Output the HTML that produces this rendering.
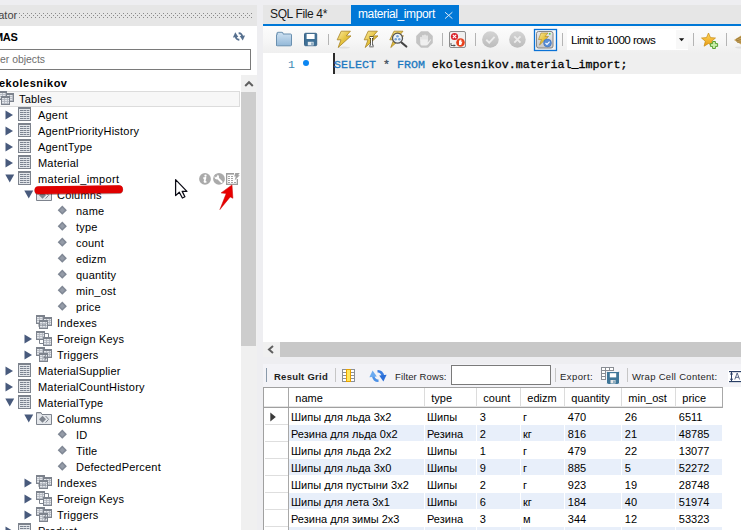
<!DOCTYPE html><html><head><meta charset="utf-8"><style>
*{box-sizing:border-box;margin:0;padding:0}
html,body{width:741px;height:530px;overflow:hidden;background:#eeeef1;font-family:"Liberation Sans",sans-serif;font-size:11px;color:#000}
body{position:relative}
.a{position:absolute;white-space:nowrap}
.sep{position:absolute;width:1px;background:#c6c6c6}
.tt{position:absolute;white-space:nowrap;line-height:14px;letter-spacing:0.2px;color:#000}
.gc{position:absolute;white-space:nowrap;line-height:14px;font-size:11px;color:#000}
</style></head><body><div class="a" style="left:0;top:5px;width:257px;height:21px;background:#e6e6e6;overflow:hidden;z-index:2"><div class="a" style="left:-1.8px;top:3px;font-size:11px;color:#444;line-height:14px">ator</div><svg class="a" style="left:19px;top:8px" width="233" height="5"><defs><pattern id="dp" width="4" height="4" patternUnits="userSpaceOnUse"><rect x="0" y="0" width="1" height="1" fill="#8a8a8a"/><rect x="2" y="2" width="1" height="1" fill="#8a8a8a"/></pattern></defs><rect x="0" y="0" width="233" height="5" fill="url(#dp)"/></svg></div><div class="a" style="left:0;top:25px;width:257px;height:505px;background:#fff;overflow:hidden"><div class="a" style="left:-6px;top:5px;font-weight:bold;font-size:11px;line-height:14px;letter-spacing:-0.3px">MAS</div><svg class="a" style="left:230px;top:4px" width="18" height="14" viewBox="369 368 18 15"><g transform="translate(378 376) scale(0.74 0.74) translate(-378 -376)"><path d="M372 376 A6 6 0 0 0 378.5 382 L378.5 379.2 A3.2 3.2 0 0 1 374.8 376 Z" fill="#56708f"/><path d="M372.6 370 L369.2 377.4 L377 376.6 Z" fill="#56708f"/><path d="M384 376 A6 6 0 0 0 377.5 370 L377.5 372.8 A3.2 3.2 0 0 1 381.2 376 Z" fill="#56708f"/><path d="M383.4 382 L386.8 374.6 L379 375.4 Z" fill="#56708f"/></g></svg><div class="a" style="left:-1px;top:24px;width:252px;height:21px;border:1px solid #7a7a7a;background:#fff"></div><div class="a" style="left:0px;top:28px;color:#6d6d6d;line-height:14px;font-size:10.4px">er objects</div><div class="a" style="left:-1px;top:51px;font-weight:bold;line-height:14px;letter-spacing:0.5px">ekolesnikov</div><div class="a" style="left:241px;top:50px;width:16px;height:460px;background:#f0f0f0"></div><svg class="a" style="left:244px;top:55px" width="10" height="7" viewBox="0 0 10 7"><path d="M1.2 6 L5 2.2 L8.8 6" stroke="#606060" stroke-width="2" fill="none"/></svg><div class="a" style="left:241px;top:67px;width:15px;height:254px;background:#cdcdcd"></div><div class="a" style="left:-1px;top:66px;width:241px;height:16px;background:#f7f7f7;border:1px solid #dcdcdc"></div><svg class="a" style="left:0px;top:66px" width="15" height="15" viewBox="0 0 15 15"><rect x="-1" y="0" width="8" height="9" fill="#7d838d"/><rect x="0" y="2" width="6" height="6" fill="#e4e7eb"/><rect x="0" y="3" width="6" height="0.8" fill="#b0b5bd"/><rect x="0" y="5" width="6" height="0.8" fill="#b0b5bd"/><rect x="0" y="7" width="6" height="0.8" fill="#b0b5bd"/><rect x="2" y="2" width="0.8" height="6" fill="#b0b5bd"/><rect x="5" y="2" width="0.8" height="6" fill="#b0b5bd"/><rect x="6" y="2" width="8" height="9" fill="#7d838d"/><rect x="7" y="4" width="6" height="6" fill="#e4e7eb"/><rect x="7" y="5" width="6" height="0.8" fill="#b0b5bd"/><rect x="7" y="7" width="6" height="0.8" fill="#b0b5bd"/><rect x="7" y="9" width="6" height="0.8" fill="#b0b5bd"/><rect x="9" y="4" width="0.8" height="6" fill="#b0b5bd"/><rect x="12" y="4" width="0.8" height="6" fill="#b0b5bd"/><rect x="1" y="5" width="9" height="9" fill="#7d838d"/><rect x="2" y="7" width="7" height="6" fill="#e4e7eb"/><rect x="2" y="8" width="7" height="0.8" fill="#b0b5bd"/><rect x="2" y="10" width="7" height="0.8" fill="#b0b5bd"/><rect x="2" y="12" width="7" height="0.8" fill="#b0b5bd"/><rect x="4" y="7" width="0.8" height="6" fill="#b0b5bd"/><rect x="7" y="7" width="0.8" height="6" fill="#b0b5bd"/></svg><div class="tt" style="left:19px;top:67px">Tables</div><svg class="a" style="left:5px;top:85px" width="9" height="10" viewBox="0 0 9 10"><path d="M0.5 0.5 L8 5 L0.5 9.5 Z" fill="#485a7c"/></svg><svg class="a" style="left:18px;top:82px" width="13" height="14" viewBox="0 0 13 14"><rect x="0" y="0" width="13" height="14" fill="#7d838d"/><rect x="1" y="2" width="11" height="11" fill="#e4e7eb"/><rect x="2" y="3" width="3" height="1" fill="#7b8390"/><rect x="5.4" y="3" width="3" height="1" fill="#7b8390"/><rect x="9" y="3" width="2.3" height="1" fill="#7b8390"/><rect x="2" y="5" width="3" height="1" fill="#7b8390"/><rect x="5.4" y="5" width="3" height="1" fill="#7b8390"/><rect x="9" y="5" width="2.3" height="1" fill="#7b8390"/><rect x="2" y="7" width="3" height="1" fill="#7b8390"/><rect x="5.4" y="7" width="3" height="1" fill="#7b8390"/><rect x="9" y="7" width="2.3" height="1" fill="#7b8390"/><rect x="2" y="9" width="3" height="1" fill="#7b8390"/><rect x="5.4" y="9" width="3" height="1" fill="#7b8390"/><rect x="9" y="9" width="2.3" height="1" fill="#7b8390"/><rect x="2" y="11" width="3" height="1" fill="#7b8390"/><rect x="5.4" y="11" width="3" height="1" fill="#7b8390"/><rect x="9" y="11" width="2.3" height="1" fill="#7b8390"/></svg><div class="tt" style="left:38px;top:83px">Agent</div><svg class="a" style="left:5px;top:101px" width="9" height="10" viewBox="0 0 9 10"><path d="M0.5 0.5 L8 5 L0.5 9.5 Z" fill="#485a7c"/></svg><svg class="a" style="left:18px;top:98px" width="13" height="14" viewBox="0 0 13 14"><rect x="0" y="0" width="13" height="14" fill="#7d838d"/><rect x="1" y="2" width="11" height="11" fill="#e4e7eb"/><rect x="2" y="3" width="3" height="1" fill="#7b8390"/><rect x="5.4" y="3" width="3" height="1" fill="#7b8390"/><rect x="9" y="3" width="2.3" height="1" fill="#7b8390"/><rect x="2" y="5" width="3" height="1" fill="#7b8390"/><rect x="5.4" y="5" width="3" height="1" fill="#7b8390"/><rect x="9" y="5" width="2.3" height="1" fill="#7b8390"/><rect x="2" y="7" width="3" height="1" fill="#7b8390"/><rect x="5.4" y="7" width="3" height="1" fill="#7b8390"/><rect x="9" y="7" width="2.3" height="1" fill="#7b8390"/><rect x="2" y="9" width="3" height="1" fill="#7b8390"/><rect x="5.4" y="9" width="3" height="1" fill="#7b8390"/><rect x="9" y="9" width="2.3" height="1" fill="#7b8390"/><rect x="2" y="11" width="3" height="1" fill="#7b8390"/><rect x="5.4" y="11" width="3" height="1" fill="#7b8390"/><rect x="9" y="11" width="2.3" height="1" fill="#7b8390"/></svg><div class="tt" style="left:38px;top:99px">AgentPriorityHistory</div><svg class="a" style="left:5px;top:117px" width="9" height="10" viewBox="0 0 9 10"><path d="M0.5 0.5 L8 5 L0.5 9.5 Z" fill="#485a7c"/></svg><svg class="a" style="left:18px;top:114px" width="13" height="14" viewBox="0 0 13 14"><rect x="0" y="0" width="13" height="14" fill="#7d838d"/><rect x="1" y="2" width="11" height="11" fill="#e4e7eb"/><rect x="2" y="3" width="3" height="1" fill="#7b8390"/><rect x="5.4" y="3" width="3" height="1" fill="#7b8390"/><rect x="9" y="3" width="2.3" height="1" fill="#7b8390"/><rect x="2" y="5" width="3" height="1" fill="#7b8390"/><rect x="5.4" y="5" width="3" height="1" fill="#7b8390"/><rect x="9" y="5" width="2.3" height="1" fill="#7b8390"/><rect x="2" y="7" width="3" height="1" fill="#7b8390"/><rect x="5.4" y="7" width="3" height="1" fill="#7b8390"/><rect x="9" y="7" width="2.3" height="1" fill="#7b8390"/><rect x="2" y="9" width="3" height="1" fill="#7b8390"/><rect x="5.4" y="9" width="3" height="1" fill="#7b8390"/><rect x="9" y="9" width="2.3" height="1" fill="#7b8390"/><rect x="2" y="11" width="3" height="1" fill="#7b8390"/><rect x="5.4" y="11" width="3" height="1" fill="#7b8390"/><rect x="9" y="11" width="2.3" height="1" fill="#7b8390"/></svg><div class="tt" style="left:38px;top:115px">AgentType</div><svg class="a" style="left:5px;top:133px" width="9" height="10" viewBox="0 0 9 10"><path d="M0.5 0.5 L8 5 L0.5 9.5 Z" fill="#485a7c"/></svg><svg class="a" style="left:18px;top:130px" width="13" height="14" viewBox="0 0 13 14"><rect x="0" y="0" width="13" height="14" fill="#7d838d"/><rect x="1" y="2" width="11" height="11" fill="#e4e7eb"/><rect x="2" y="3" width="3" height="1" fill="#7b8390"/><rect x="5.4" y="3" width="3" height="1" fill="#7b8390"/><rect x="9" y="3" width="2.3" height="1" fill="#7b8390"/><rect x="2" y="5" width="3" height="1" fill="#7b8390"/><rect x="5.4" y="5" width="3" height="1" fill="#7b8390"/><rect x="9" y="5" width="2.3" height="1" fill="#7b8390"/><rect x="2" y="7" width="3" height="1" fill="#7b8390"/><rect x="5.4" y="7" width="3" height="1" fill="#7b8390"/><rect x="9" y="7" width="2.3" height="1" fill="#7b8390"/><rect x="2" y="9" width="3" height="1" fill="#7b8390"/><rect x="5.4" y="9" width="3" height="1" fill="#7b8390"/><rect x="9" y="9" width="2.3" height="1" fill="#7b8390"/><rect x="2" y="11" width="3" height="1" fill="#7b8390"/><rect x="5.4" y="11" width="3" height="1" fill="#7b8390"/><rect x="9" y="11" width="2.3" height="1" fill="#7b8390"/></svg><div class="tt" style="left:38px;top:131px">Material</div><svg class="a" style="left:5px;top:149px" width="10" height="9" viewBox="0 0 10 9"><path d="M0.3 0.5 L9.2 0.5 L4.75 8.5 Z" fill="#485a7c"/></svg><svg class="a" style="left:18px;top:146px" width="13" height="14" viewBox="0 0 13 14"><rect x="0" y="0" width="13" height="14" fill="#7d838d"/><rect x="1" y="2" width="11" height="11" fill="#e4e7eb"/><rect x="2" y="3" width="3" height="1" fill="#7b8390"/><rect x="5.4" y="3" width="3" height="1" fill="#7b8390"/><rect x="9" y="3" width="2.3" height="1" fill="#7b8390"/><rect x="2" y="5" width="3" height="1" fill="#7b8390"/><rect x="5.4" y="5" width="3" height="1" fill="#7b8390"/><rect x="9" y="5" width="2.3" height="1" fill="#7b8390"/><rect x="2" y="7" width="3" height="1" fill="#7b8390"/><rect x="5.4" y="7" width="3" height="1" fill="#7b8390"/><rect x="9" y="7" width="2.3" height="1" fill="#7b8390"/><rect x="2" y="9" width="3" height="1" fill="#7b8390"/><rect x="5.4" y="9" width="3" height="1" fill="#7b8390"/><rect x="9" y="9" width="2.3" height="1" fill="#7b8390"/><rect x="2" y="11" width="3" height="1" fill="#7b8390"/><rect x="5.4" y="11" width="3" height="1" fill="#7b8390"/><rect x="9" y="11" width="2.3" height="1" fill="#7b8390"/></svg><div class="tt" style="left:38px;top:147px;letter-spacing:0.38px">material_import</div><svg class="a" style="left:24px;top:165px" width="10" height="9" viewBox="0 0 10 9"><path d="M0.3 0.5 L9.2 0.5 L4.75 8.5 Z" fill="#485a7c"/></svg><svg class="a" style="left:36px;top:162px" width="16" height="15" viewBox="0 0 16 15"><path d="M0.5 13.5 V1.5 H5 L6 3.5 H15.5 V13.5 Z" fill="#e4e7eb" stroke="#7d838d"/><rect x="1" y="1" width="4" height="1.3" fill="#7d838d"/><path d="M6.5 4.8 L10 8.3 L6.5 11.8 L3 8.3 Z" fill="#7d838d"/><path d="M9.6 5 L12.6 8.3 L9.6 11.6" stroke="#7d838d" stroke-width="1" fill="none"/></svg><div class="tt" style="left:57px;top:163px">Columns</div><svg class="a" style="left:57px;top:180px" width="10" height="10" viewBox="0 0 10 10"><path d="M5.3 0.6 L9.9 5.2 L5.3 9.8 L0.7 5.2 Z" fill="#7f8794"/><path d="M5.3 2.6 L7.9 5.2 L5.3 7.8 L2.7 5.2 Z" fill="#959ca8"/></svg><div class="tt" style="left:76px;top:179px">name</div><svg class="a" style="left:57px;top:196px" width="10" height="10" viewBox="0 0 10 10"><path d="M5.3 0.6 L9.9 5.2 L5.3 9.8 L0.7 5.2 Z" fill="#7f8794"/><path d="M5.3 2.6 L7.9 5.2 L5.3 7.8 L2.7 5.2 Z" fill="#959ca8"/></svg><div class="tt" style="left:76px;top:195px">type</div><svg class="a" style="left:57px;top:212px" width="10" height="10" viewBox="0 0 10 10"><path d="M5.3 0.6 L9.9 5.2 L5.3 9.8 L0.7 5.2 Z" fill="#7f8794"/><path d="M5.3 2.6 L7.9 5.2 L5.3 7.8 L2.7 5.2 Z" fill="#959ca8"/></svg><div class="tt" style="left:76px;top:211px">count</div><svg class="a" style="left:57px;top:228px" width="10" height="10" viewBox="0 0 10 10"><path d="M5.3 0.6 L9.9 5.2 L5.3 9.8 L0.7 5.2 Z" fill="#7f8794"/><path d="M5.3 2.6 L7.9 5.2 L5.3 7.8 L2.7 5.2 Z" fill="#959ca8"/></svg><div class="tt" style="left:76px;top:227px">edizm</div><svg class="a" style="left:57px;top:244px" width="10" height="10" viewBox="0 0 10 10"><path d="M5.3 0.6 L9.9 5.2 L5.3 9.8 L0.7 5.2 Z" fill="#7f8794"/><path d="M5.3 2.6 L7.9 5.2 L5.3 7.8 L2.7 5.2 Z" fill="#959ca8"/></svg><div class="tt" style="left:76px;top:243px">quantity</div><svg class="a" style="left:57px;top:260px" width="10" height="10" viewBox="0 0 10 10"><path d="M5.3 0.6 L9.9 5.2 L5.3 9.8 L0.7 5.2 Z" fill="#7f8794"/><path d="M5.3 2.6 L7.9 5.2 L5.3 7.8 L2.7 5.2 Z" fill="#959ca8"/></svg><div class="tt" style="left:76px;top:259px">min_ost</div><svg class="a" style="left:57px;top:276px" width="10" height="10" viewBox="0 0 10 10"><path d="M5.3 0.6 L9.9 5.2 L5.3 9.8 L0.7 5.2 Z" fill="#7f8794"/><path d="M5.3 2.6 L7.9 5.2 L5.3 7.8 L2.7 5.2 Z" fill="#959ca8"/></svg><div class="tt" style="left:76px;top:275px">price</div><svg class="a" style="left:36px;top:290px" width="17" height="15" viewBox="0 0 17 15"><rect x="0" y="0" width="9" height="9" fill="#7d838d"/><rect x="1" y="2" width="7" height="6" fill="#e4e7eb"/><rect x="1" y="3" width="7" height="0.8" fill="#b0b5bd"/><rect x="1" y="5" width="7" height="0.8" fill="#b0b5bd"/><rect x="1" y="7" width="7" height="0.8" fill="#b0b5bd"/><rect x="3" y="2" width="0.8" height="6" fill="#b0b5bd"/><rect x="6" y="2" width="0.8" height="6" fill="#b0b5bd"/><rect x="7" y="2" width="9" height="9" fill="#7d838d"/><rect x="8" y="4" width="7" height="6" fill="#e4e7eb"/><rect x="8" y="5" width="7" height="0.8" fill="#b0b5bd"/><rect x="8" y="7" width="7" height="0.8" fill="#b0b5bd"/><rect x="8" y="9" width="7" height="0.8" fill="#b0b5bd"/><rect x="10" y="4" width="0.8" height="6" fill="#b0b5bd"/><rect x="13" y="4" width="0.8" height="6" fill="#b0b5bd"/><rect x="3" y="5" width="9" height="9" fill="#7d838d"/><rect x="4" y="7" width="7" height="6" fill="#e4e7eb"/><rect x="4" y="8" width="7" height="0.8" fill="#b0b5bd"/><rect x="4" y="10" width="7" height="0.8" fill="#b0b5bd"/><rect x="4" y="12" width="7" height="0.8" fill="#b0b5bd"/><rect x="6" y="7" width="0.8" height="6" fill="#b0b5bd"/><rect x="9" y="7" width="0.8" height="6" fill="#b0b5bd"/><path d="M2.5 8 L5 10 L2.5 12 Z" fill="#7d838d"/><rect x="5.5" y="9.5" width="4.5" height="1" fill="#7d838d"/></svg><div class="tt" style="left:57px;top:291px">Indexes</div><svg class="a" style="left:24px;top:309px" width="9" height="10" viewBox="0 0 9 10"><path d="M0.5 0.5 L8 5 L0.5 9.5 Z" fill="#485a7c"/></svg><svg class="a" style="left:36px;top:306px" width="17" height="15" viewBox="0 0 17 15"><rect x="0" y="0" width="9" height="9" fill="#7d838d"/><rect x="1" y="2" width="7" height="6" fill="#e4e7eb"/><rect x="1" y="3" width="7" height="0.8" fill="#b0b5bd"/><rect x="1" y="5" width="7" height="0.8" fill="#b0b5bd"/><rect x="1" y="7" width="7" height="0.8" fill="#b0b5bd"/><rect x="3" y="2" width="0.8" height="6" fill="#b0b5bd"/><rect x="6" y="2" width="0.8" height="6" fill="#b0b5bd"/><rect x="7" y="6" width="9" height="9" fill="#7d838d"/><rect x="8" y="8" width="7" height="6" fill="#e4e7eb"/><rect x="8" y="9" width="7" height="0.8" fill="#b0b5bd"/><rect x="8" y="11" width="7" height="0.8" fill="#b0b5bd"/><rect x="8" y="13" width="7" height="0.8" fill="#b0b5bd"/><rect x="10" y="8" width="0.8" height="6" fill="#b0b5bd"/><rect x="13" y="8" width="0.8" height="6" fill="#b0b5bd"/><path d="M9 2.5 H12.5 V6 M3.5 9 V12.5 H7" stroke="#7d838d" stroke-width="1" fill="none"/></svg><div class="tt" style="left:57px;top:307px">Foreign Keys</div><svg class="a" style="left:24px;top:325px" width="9" height="10" viewBox="0 0 9 10"><path d="M0.5 0.5 L8 5 L0.5 9.5 Z" fill="#485a7c"/></svg><svg class="a" style="left:36px;top:322px" width="17" height="15" viewBox="0 0 17 15"><rect x="0" y="0" width="9" height="9" fill="#7d838d"/><rect x="1" y="2" width="7" height="6" fill="#e4e7eb"/><rect x="1" y="3" width="7" height="0.8" fill="#b0b5bd"/><rect x="1" y="5" width="7" height="0.8" fill="#b0b5bd"/><rect x="1" y="7" width="7" height="0.8" fill="#b0b5bd"/><rect x="3" y="2" width="0.8" height="6" fill="#b0b5bd"/><rect x="6" y="2" width="0.8" height="6" fill="#b0b5bd"/><rect x="7" y="2" width="9" height="9" fill="#7d838d"/><rect x="8" y="4" width="7" height="6" fill="#e4e7eb"/><rect x="8" y="5" width="7" height="0.8" fill="#b0b5bd"/><rect x="8" y="7" width="7" height="0.8" fill="#b0b5bd"/><rect x="8" y="9" width="7" height="0.8" fill="#b0b5bd"/><rect x="10" y="4" width="0.8" height="6" fill="#b0b5bd"/><rect x="13" y="4" width="0.8" height="6" fill="#b0b5bd"/><rect x="3" y="6" width="9" height="9" fill="#7d838d"/><rect x="4" y="8" width="7" height="6" fill="#e4e7eb"/><rect x="4" y="9" width="7" height="0.8" fill="#b0b5bd"/><rect x="4" y="11" width="7" height="0.8" fill="#b0b5bd"/><rect x="4" y="13" width="7" height="0.8" fill="#b0b5bd"/><rect x="6" y="8" width="0.8" height="6" fill="#b0b5bd"/><rect x="9" y="8" width="0.8" height="6" fill="#b0b5bd"/><path d="M10 7 L7 11 L9 11 L8 14 L11.5 10 L9.5 10 Z" fill="#7d838d"/></svg><div class="tt" style="left:57px;top:323px">Triggers</div><svg class="a" style="left:5px;top:341px" width="9" height="10" viewBox="0 0 9 10"><path d="M0.5 0.5 L8 5 L0.5 9.5 Z" fill="#485a7c"/></svg><svg class="a" style="left:18px;top:338px" width="13" height="14" viewBox="0 0 13 14"><rect x="0" y="0" width="13" height="14" fill="#7d838d"/><rect x="1" y="2" width="11" height="11" fill="#e4e7eb"/><rect x="2" y="3" width="3" height="1" fill="#7b8390"/><rect x="5.4" y="3" width="3" height="1" fill="#7b8390"/><rect x="9" y="3" width="2.3" height="1" fill="#7b8390"/><rect x="2" y="5" width="3" height="1" fill="#7b8390"/><rect x="5.4" y="5" width="3" height="1" fill="#7b8390"/><rect x="9" y="5" width="2.3" height="1" fill="#7b8390"/><rect x="2" y="7" width="3" height="1" fill="#7b8390"/><rect x="5.4" y="7" width="3" height="1" fill="#7b8390"/><rect x="9" y="7" width="2.3" height="1" fill="#7b8390"/><rect x="2" y="9" width="3" height="1" fill="#7b8390"/><rect x="5.4" y="9" width="3" height="1" fill="#7b8390"/><rect x="9" y="9" width="2.3" height="1" fill="#7b8390"/><rect x="2" y="11" width="3" height="1" fill="#7b8390"/><rect x="5.4" y="11" width="3" height="1" fill="#7b8390"/><rect x="9" y="11" width="2.3" height="1" fill="#7b8390"/></svg><div class="tt" style="left:38px;top:339px">MaterialSupplier</div><svg class="a" style="left:5px;top:357px" width="9" height="10" viewBox="0 0 9 10"><path d="M0.5 0.5 L8 5 L0.5 9.5 Z" fill="#485a7c"/></svg><svg class="a" style="left:18px;top:354px" width="13" height="14" viewBox="0 0 13 14"><rect x="0" y="0" width="13" height="14" fill="#7d838d"/><rect x="1" y="2" width="11" height="11" fill="#e4e7eb"/><rect x="2" y="3" width="3" height="1" fill="#7b8390"/><rect x="5.4" y="3" width="3" height="1" fill="#7b8390"/><rect x="9" y="3" width="2.3" height="1" fill="#7b8390"/><rect x="2" y="5" width="3" height="1" fill="#7b8390"/><rect x="5.4" y="5" width="3" height="1" fill="#7b8390"/><rect x="9" y="5" width="2.3" height="1" fill="#7b8390"/><rect x="2" y="7" width="3" height="1" fill="#7b8390"/><rect x="5.4" y="7" width="3" height="1" fill="#7b8390"/><rect x="9" y="7" width="2.3" height="1" fill="#7b8390"/><rect x="2" y="9" width="3" height="1" fill="#7b8390"/><rect x="5.4" y="9" width="3" height="1" fill="#7b8390"/><rect x="9" y="9" width="2.3" height="1" fill="#7b8390"/><rect x="2" y="11" width="3" height="1" fill="#7b8390"/><rect x="5.4" y="11" width="3" height="1" fill="#7b8390"/><rect x="9" y="11" width="2.3" height="1" fill="#7b8390"/></svg><div class="tt" style="left:38px;top:355px">MaterialCountHistory</div><svg class="a" style="left:5px;top:373px" width="10" height="9" viewBox="0 0 10 9"><path d="M0.3 0.5 L9.2 0.5 L4.75 8.5 Z" fill="#485a7c"/></svg><svg class="a" style="left:18px;top:370px" width="13" height="14" viewBox="0 0 13 14"><rect x="0" y="0" width="13" height="14" fill="#7d838d"/><rect x="1" y="2" width="11" height="11" fill="#e4e7eb"/><rect x="2" y="3" width="3" height="1" fill="#7b8390"/><rect x="5.4" y="3" width="3" height="1" fill="#7b8390"/><rect x="9" y="3" width="2.3" height="1" fill="#7b8390"/><rect x="2" y="5" width="3" height="1" fill="#7b8390"/><rect x="5.4" y="5" width="3" height="1" fill="#7b8390"/><rect x="9" y="5" width="2.3" height="1" fill="#7b8390"/><rect x="2" y="7" width="3" height="1" fill="#7b8390"/><rect x="5.4" y="7" width="3" height="1" fill="#7b8390"/><rect x="9" y="7" width="2.3" height="1" fill="#7b8390"/><rect x="2" y="9" width="3" height="1" fill="#7b8390"/><rect x="5.4" y="9" width="3" height="1" fill="#7b8390"/><rect x="9" y="9" width="2.3" height="1" fill="#7b8390"/><rect x="2" y="11" width="3" height="1" fill="#7b8390"/><rect x="5.4" y="11" width="3" height="1" fill="#7b8390"/><rect x="9" y="11" width="2.3" height="1" fill="#7b8390"/></svg><div class="tt" style="left:38px;top:371px">MaterialType</div><svg class="a" style="left:24px;top:389px" width="10" height="9" viewBox="0 0 10 9"><path d="M0.3 0.5 L9.2 0.5 L4.75 8.5 Z" fill="#485a7c"/></svg><svg class="a" style="left:36px;top:386px" width="16" height="15" viewBox="0 0 16 15"><path d="M0.5 13.5 V1.5 H5 L6 3.5 H15.5 V13.5 Z" fill="#e4e7eb" stroke="#7d838d"/><rect x="1" y="1" width="4" height="1.3" fill="#7d838d"/><path d="M6.5 4.8 L10 8.3 L6.5 11.8 L3 8.3 Z" fill="#7d838d"/><path d="M9.6 5 L12.6 8.3 L9.6 11.6" stroke="#7d838d" stroke-width="1" fill="none"/></svg><div class="tt" style="left:57px;top:387px">Columns</div><svg class="a" style="left:57px;top:404px" width="10" height="10" viewBox="0 0 10 10"><path d="M5.3 0.6 L9.9 5.2 L5.3 9.8 L0.7 5.2 Z" fill="#7f8794"/><path d="M5.3 2.6 L7.9 5.2 L5.3 7.8 L2.7 5.2 Z" fill="#959ca8"/></svg><div class="tt" style="left:76px;top:403px">ID</div><svg class="a" style="left:57px;top:420px" width="10" height="10" viewBox="0 0 10 10"><path d="M5.3 0.6 L9.9 5.2 L5.3 9.8 L0.7 5.2 Z" fill="#7f8794"/><path d="M5.3 2.6 L7.9 5.2 L5.3 7.8 L2.7 5.2 Z" fill="#959ca8"/></svg><div class="tt" style="left:76px;top:419px">Title</div><svg class="a" style="left:57px;top:436px" width="10" height="10" viewBox="0 0 10 10"><path d="M5.3 0.6 L9.9 5.2 L5.3 9.8 L0.7 5.2 Z" fill="#7f8794"/><path d="M5.3 2.6 L7.9 5.2 L5.3 7.8 L2.7 5.2 Z" fill="#959ca8"/></svg><div class="tt" style="left:76px;top:435px">DefectedPercent</div><svg class="a" style="left:24px;top:453px" width="9" height="10" viewBox="0 0 9 10"><path d="M0.5 0.5 L8 5 L0.5 9.5 Z" fill="#485a7c"/></svg><svg class="a" style="left:36px;top:450px" width="17" height="15" viewBox="0 0 17 15"><rect x="0" y="0" width="9" height="9" fill="#7d838d"/><rect x="1" y="2" width="7" height="6" fill="#e4e7eb"/><rect x="1" y="3" width="7" height="0.8" fill="#b0b5bd"/><rect x="1" y="5" width="7" height="0.8" fill="#b0b5bd"/><rect x="1" y="7" width="7" height="0.8" fill="#b0b5bd"/><rect x="3" y="2" width="0.8" height="6" fill="#b0b5bd"/><rect x="6" y="2" width="0.8" height="6" fill="#b0b5bd"/><rect x="7" y="2" width="9" height="9" fill="#7d838d"/><rect x="8" y="4" width="7" height="6" fill="#e4e7eb"/><rect x="8" y="5" width="7" height="0.8" fill="#b0b5bd"/><rect x="8" y="7" width="7" height="0.8" fill="#b0b5bd"/><rect x="8" y="9" width="7" height="0.8" fill="#b0b5bd"/><rect x="10" y="4" width="0.8" height="6" fill="#b0b5bd"/><rect x="13" y="4" width="0.8" height="6" fill="#b0b5bd"/><rect x="3" y="5" width="9" height="9" fill="#7d838d"/><rect x="4" y="7" width="7" height="6" fill="#e4e7eb"/><rect x="4" y="8" width="7" height="0.8" fill="#b0b5bd"/><rect x="4" y="10" width="7" height="0.8" fill="#b0b5bd"/><rect x="4" y="12" width="7" height="0.8" fill="#b0b5bd"/><rect x="6" y="7" width="0.8" height="6" fill="#b0b5bd"/><rect x="9" y="7" width="0.8" height="6" fill="#b0b5bd"/><path d="M2.5 8 L5 10 L2.5 12 Z" fill="#7d838d"/><rect x="5.5" y="9.5" width="4.5" height="1" fill="#7d838d"/></svg><div class="tt" style="left:57px;top:451px">Indexes</div><svg class="a" style="left:24px;top:469px" width="9" height="10" viewBox="0 0 9 10"><path d="M0.5 0.5 L8 5 L0.5 9.5 Z" fill="#485a7c"/></svg><svg class="a" style="left:36px;top:466px" width="17" height="15" viewBox="0 0 17 15"><rect x="0" y="0" width="9" height="9" fill="#7d838d"/><rect x="1" y="2" width="7" height="6" fill="#e4e7eb"/><rect x="1" y="3" width="7" height="0.8" fill="#b0b5bd"/><rect x="1" y="5" width="7" height="0.8" fill="#b0b5bd"/><rect x="1" y="7" width="7" height="0.8" fill="#b0b5bd"/><rect x="3" y="2" width="0.8" height="6" fill="#b0b5bd"/><rect x="6" y="2" width="0.8" height="6" fill="#b0b5bd"/><rect x="7" y="6" width="9" height="9" fill="#7d838d"/><rect x="8" y="8" width="7" height="6" fill="#e4e7eb"/><rect x="8" y="9" width="7" height="0.8" fill="#b0b5bd"/><rect x="8" y="11" width="7" height="0.8" fill="#b0b5bd"/><rect x="8" y="13" width="7" height="0.8" fill="#b0b5bd"/><rect x="10" y="8" width="0.8" height="6" fill="#b0b5bd"/><rect x="13" y="8" width="0.8" height="6" fill="#b0b5bd"/><path d="M9 2.5 H12.5 V6 M3.5 9 V12.5 H7" stroke="#7d838d" stroke-width="1" fill="none"/></svg><div class="tt" style="left:57px;top:467px">Foreign Keys</div><svg class="a" style="left:24px;top:485px" width="9" height="10" viewBox="0 0 9 10"><path d="M0.5 0.5 L8 5 L0.5 9.5 Z" fill="#485a7c"/></svg><svg class="a" style="left:36px;top:482px" width="17" height="15" viewBox="0 0 17 15"><rect x="0" y="0" width="9" height="9" fill="#7d838d"/><rect x="1" y="2" width="7" height="6" fill="#e4e7eb"/><rect x="1" y="3" width="7" height="0.8" fill="#b0b5bd"/><rect x="1" y="5" width="7" height="0.8" fill="#b0b5bd"/><rect x="1" y="7" width="7" height="0.8" fill="#b0b5bd"/><rect x="3" y="2" width="0.8" height="6" fill="#b0b5bd"/><rect x="6" y="2" width="0.8" height="6" fill="#b0b5bd"/><rect x="7" y="2" width="9" height="9" fill="#7d838d"/><rect x="8" y="4" width="7" height="6" fill="#e4e7eb"/><rect x="8" y="5" width="7" height="0.8" fill="#b0b5bd"/><rect x="8" y="7" width="7" height="0.8" fill="#b0b5bd"/><rect x="8" y="9" width="7" height="0.8" fill="#b0b5bd"/><rect x="10" y="4" width="0.8" height="6" fill="#b0b5bd"/><rect x="13" y="4" width="0.8" height="6" fill="#b0b5bd"/><rect x="3" y="6" width="9" height="9" fill="#7d838d"/><rect x="4" y="8" width="7" height="6" fill="#e4e7eb"/><rect x="4" y="9" width="7" height="0.8" fill="#b0b5bd"/><rect x="4" y="11" width="7" height="0.8" fill="#b0b5bd"/><rect x="4" y="13" width="7" height="0.8" fill="#b0b5bd"/><rect x="6" y="8" width="0.8" height="6" fill="#b0b5bd"/><rect x="9" y="8" width="0.8" height="6" fill="#b0b5bd"/><path d="M10 7 L7 11 L9 11 L8 14 L11.5 10 L9.5 10 Z" fill="#7d838d"/></svg><div class="tt" style="left:57px;top:483px">Triggers</div><svg class="a" style="left:5px;top:501px" width="9" height="10" viewBox="0 0 9 10"><path d="M0.5 0.5 L8 5 L0.5 9.5 Z" fill="#485a7c"/></svg><svg class="a" style="left:18px;top:498px" width="13" height="14" viewBox="0 0 13 14"><rect x="0" y="0" width="13" height="14" fill="#7d838d"/><rect x="1" y="2" width="11" height="11" fill="#e4e7eb"/><rect x="2" y="3" width="3" height="1" fill="#7b8390"/><rect x="5.4" y="3" width="3" height="1" fill="#7b8390"/><rect x="9" y="3" width="2.3" height="1" fill="#7b8390"/><rect x="2" y="5" width="3" height="1" fill="#7b8390"/><rect x="5.4" y="5" width="3" height="1" fill="#7b8390"/><rect x="9" y="5" width="2.3" height="1" fill="#7b8390"/><rect x="2" y="7" width="3" height="1" fill="#7b8390"/><rect x="5.4" y="7" width="3" height="1" fill="#7b8390"/><rect x="9" y="7" width="2.3" height="1" fill="#7b8390"/><rect x="2" y="9" width="3" height="1" fill="#7b8390"/><rect x="5.4" y="9" width="3" height="1" fill="#7b8390"/><rect x="9" y="9" width="2.3" height="1" fill="#7b8390"/><rect x="2" y="11" width="3" height="1" fill="#7b8390"/><rect x="5.4" y="11" width="3" height="1" fill="#7b8390"/><rect x="9" y="11" width="2.3" height="1" fill="#7b8390"/></svg><div class="tt" style="left:38px;top:499px">Product</div><div class="a" style="left:199px;top:148px"></div><svg class="a" style="left:198px;top:147px" width="43" height="14" viewBox="198 172 43 14"><circle cx="205" cy="178.9" r="5.9" fill="#aaaaaa"/><circle cx="205.5" cy="175.7" r="1.15" fill="#fff"/><path d="M203.3 178.4 L205.5 177.7 L204.5 181.4 Q204.3 182.5 206.4 181.5" stroke="#fff" stroke-width="1.7" fill="none" stroke-linejoin="round"/><circle cx="219" cy="178.9" r="5.9" fill="#aaaaaa"/><path d="M217.6 178 L221.6 182" stroke="#fff" stroke-width="2" stroke-linecap="round"/><circle cx="216.8" cy="177.1" r="2.3" fill="#fff"/><path d="M214.2 175.8 L215.8 177.4 L217.6 175.6 L216 174 Z" fill="#aaaaaa"/><rect x="227" y="174.5" width="10" height="9.5" fill="#fff"/><rect x="226" y="173" width="1.3" height="12" fill="#9c9c9c"/><rect x="226" y="173" width="8" height="1.6" fill="#9c9c9c"/><rect x="226" y="183.7" width="12" height="1.3" fill="#9c9c9c"/><rect x="236.7" y="179" width="1.3" height="6" fill="#9c9c9c"/><path d="M228 176.5h2M231 176.5h2M228 178.5h2M231 178.5h2M228 180.5h2M231 180.5h2M228 182.5h2M231 182.5h2M234 182.5h2" stroke="#a4a4a4" stroke-width="1"/><path d="M235.3 173.1 H239.8 L238 175.3 H239.8 L234.6 180.4 L235.8 176.6 H234.2 Z" fill="#a2a2a2"/></svg></div><svg class="a" style="left:28px;top:180px" width="100" height="20" viewBox="28 180 100 20"><path d="M38.5 190.8 L119 189.8" stroke="#600000" stroke-opacity="0.45" stroke-width="8.4" stroke-linecap="round"/><path d="M38.5 190.2 L119 189.2" stroke="#e00000" stroke-width="7.8" stroke-linecap="round"/></svg><svg class="a" style="left:170px;top:174px" width="22" height="28" viewBox="170 174 22 28"><path d="M175.6 179.6 V195.6 L179.3 192.2 L182.4 198 L184.9 196.8 L182.2 191.4 H186.9 Z" fill="#fff" stroke="#0a0a14" stroke-width="1.25" stroke-linejoin="round"/></svg><svg class="a" style="left:215px;top:182px" width="22" height="32" viewBox="215 182 22 32"><path d="M232 184.9 L221.1 192.9 L226.2 193.5 L219.9 209.6 L230.2 196.9 L232.9 198.3 Z" fill="#e80000" stroke="#c80000" stroke-width="0.5" stroke-linejoin="round"/></svg><div class="a" style="left:263px;top:5px;width:478px;height:19px;background:#e6e6e6"></div><div class="a" style="left:270px;top:7px;font-size:12px;line-height:15px;color:#1a1a1a;letter-spacing:-0.36px">SQL File 4*</div><div class="a" style="left:351px;top:5px;width:108px;height:19px;background:#0078d7"></div><div class="a" style="left:358px;top:7px;font-size:12px;line-height:15px;color:#fff;letter-spacing:-0.39px">material_import</div><svg class="a" style="left:444px;top:11px" width="10" height="9" viewBox="0 0 10 9"><path d="M1 1.2 L8.4 7.6 M8.4 1.2 L1 7.6" stroke="#d8e8f8" stroke-width="1"/></svg><div class="a" style="left:263px;top:24px;width:478px;height:2px;background:#0078d7"></div><div class="a" style="left:263px;top:26px;width:478px;height:27px;background:linear-gradient(#fcfcfc,#f7f7f7 50%,#efefef)"></div><svg class="a" style="left:263px;top:26px" width="478" height="27" viewBox="263 26 478 27"><defs><linearGradient id="fg" x1="0" y1="0" x2="0" y2="1"><stop offset="0" stop-color="#cfe2f2"/><stop offset="1" stop-color="#93b8d8"/></linearGradient><linearGradient id="bg1" x1="0" y1="0" x2="1" y2="1"><stop offset="0" stop-color="#fbeaa0"/><stop offset="0.5" stop-color="#e6c440"/><stop offset="1" stop-color="#d0a828"/></linearGradient><linearGradient id="gg" x1="0" y1="0" x2="0" y2="1"><stop offset="0" stop-color="#d4d4d4"/><stop offset="1" stop-color="#bcbcbc"/></linearGradient><linearGradient id="tg" x1="0" y1="0" x2="0" y2="1"><stop offset="0" stop-color="#e8e8e8"/><stop offset="1" stop-color="#c8c8c8"/></linearGradient><linearGradient id="sg" x1="0" y1="0" x2="0" y2="1"><stop offset="0" stop-color="#ffd860"/><stop offset="1" stop-color="#e89a10"/></linearGradient></defs><path d="M276.5 45.5 V35 Q276.5 34 277.5 34 H277 V33 Q277 32.3 278 32.3 H282 Q283 32.3 283 33.3 V34 H290.5 Q291.5 34 291.5 35 V45 Q291.5 45.8 290.5 45.8 H277.5 Q276.5 45.8 276.5 45 Z" fill="url(#fg)" stroke="#6a90b0" stroke-width="1"/><rect x="304.5" y="33.3" width="12.2" height="12.4" rx="1" fill="#3f7096" stroke="#3a6488"/><rect x="306.6" y="34" width="8" height="5" fill="#fff"/><rect x="307.8" y="41.8" width="5.8" height="3.6" fill="#e8eef2"/><rect x="311.5" y="42.5" width="1" height="2.4" fill="#3f7096"/><rect x="328" y="34" width="1" height="11" fill="#b4b4b4"/><rect x="442" y="33" width="1" height="13" fill="#b4b4b4"/><rect x="475" y="33" width="1" height="13" fill="#b4b4b4"/><rect x="562" y="33" width="1" height="13" fill="#b4b4b4"/><rect x="693" y="33" width="1" height="13" fill="#b4b4b4"/><rect x="726" y="33" width="1" height="13" fill="#b4b4b4"/><ellipse cx="344" cy="47.6" rx="6" ry="1" fill="#000" fill-opacity="0.08"/><path d="M341.2 31.2 H350.4 L346.3 35.9 H351 L338.2 47.5 L341 39.8 H337.2 Z" fill="url(#bg1)" stroke="#a88424" stroke-width="0.8" stroke-linejoin="round"/><path d="M368.2 31.2 H377.4 L373.3 35.9 H378 L365.2 47.5 L368 39.8 H364.2 Z" fill="url(#bg1)" stroke="#a88424" stroke-width="0.8" stroke-linejoin="round"/><path d="M369.5 37.5 H373.5 M371.5 37.5 V46 M369.5 46 H373.5" stroke="#333" stroke-width="2.4"/><path d="M369.8 37.5 H373.2 M371.5 37.5 V46 M369.8 46 H373.2" stroke="#fff" stroke-width="1"/><path d="M394 31.2 H403 L399 35.9 H403.5 L390.8 47.5 L393.6 39.8 H389.8 Z" fill="url(#bg1)" stroke="#a88424" stroke-width="0.8" stroke-linejoin="round"/><path d="M401.5 42.5 L406.3 46.5" stroke="#444" stroke-width="2.2" stroke-linecap="round"/><circle cx="397.5" cy="38.2" r="5" fill="#eef3f8" stroke="#555" stroke-width="1.3"/><circle cx="397.5" cy="36.3" r="1.3" fill="#7aa6dc"/><circle cx="395.7" cy="39.3" r="1.3" fill="#7aa6dc"/><circle cx="399.3" cy="39.3" r="1.3" fill="#7aa6dc"/><path d="M421 31.2 H428 L432.8 36 V43 L428 47.8 H421 L416.2 43 V36 Z" fill="#c4c4c4"/><path d="M421 40 V37.4 M423 40 V35.6 M425 40 V35.2 M427 40.5 V36" stroke="#f0f0f0" stroke-width="1.45" stroke-linecap="round"/><path d="M420.25 39.5 H427.75 V42.5 L430.4 39.4 Q431 39 431.2 39.8 L428.2 44.2 Q427.3 45.6 425.6 45.6 H422.6 Q420.25 45.6 420.25 43 Z" fill="#f0f0f0"/><rect x="449.5" y="31.5" width="16" height="16" rx="1.5" fill="#f0f0f0" stroke="#8c8c8c"/><circle cx="454.5" cy="36.5" r="3.6" fill="#d8202a"/><path d="M452.8 34.8 L456.2 38.2 M456.2 34.8 L452.8 38.2" stroke="#fff" stroke-width="1.1"/><path d="M451 43 V45.5 H455 M454 44.5 L455 45.5 L454 46.5" stroke="#333" stroke-width="0.8" fill="none"/><circle cx="460.5" cy="42.5" r="4.3" fill="#e8401c"/><path d="M459 45 V41 Q459 40.3 459.6 40.3 Q460.2 40.3 460.2 41 V40 Q460.2 39.4 460.8 39.4 Q461.4 39.4 461.4 40 V42 L462.5 41.5 L461.2 45 Z" fill="#fff"/><circle cx="490.4" cy="39.5" r="8.3" fill="url(#gg)"/><path d="M486.3 39.8 L489.2 42.6 L494.6 36.8" stroke="#ececec" stroke-width="1.9" fill="none"/><circle cx="517.4" cy="39.5" r="8.3" fill="url(#gg)"/><path d="M514.3 36.4 L520.5 42.6 M520.5 36.4 L514.3 42.6" stroke="#ececec" stroke-width="1.9"/><rect x="534.5" y="29.5" width="22" height="21" fill="none" stroke="#0a72d6" stroke-width="1.3"/><rect x="536.5" y="31.5" width="16.5" height="16.5" rx="2" fill="url(#tg)" stroke="#7a7a7a" stroke-width="0.9"/><path d="M541 33 H548 L545 36.5 H548.5 L539.5 45 L541.5 39.5 H538.5 Z" fill="url(#bg1)" stroke="#a88424" stroke-width="0.6"/><circle cx="547.5" cy="43" r="3.9" fill="#5a8ed6" stroke="#3b6eb8" stroke-width="0.6"/><path d="M545.5 43 L547 44.4 L549.6 41.7" stroke="#fff" stroke-width="1.1" fill="none"/><circle cx="549.8" cy="33.8" r="0.9" fill="#3ecb3e"/><rect x="567" y="29" width="121" height="21" fill="#fff"/><rect x="676" y="30" width="12" height="19" fill="#f8f8f8"/><path d="M679 38.2 H684.2 L681.6 41.2 Z" fill="#111"/><path d="M708.5 33 L710.5 37.6 L715.5 38 L711.7 41.2 L712.9 46.2 L708.5 43.5 L704.1 46.2 L705.3 41.2 L701.5 38 L706.5 37.6 Z" fill="url(#sg)" stroke="#c68a10" stroke-width="0.7" stroke-linejoin="round"/><path d="M712.6 41.5 H715.4 V43.6 H717.6 V46.4 H715.4 V48.5 H712.6 V46.4 H710.4 V43.6 H712.6 Z" fill="#c9eeaa" stroke="#5aa032" stroke-width="1"/><path d="M734 40 L741 35.5 L741 44.5 Z" fill="#c9a45a"/><path d="M736 39.5 L741 37 M736 41 L741 39.5 M737 42.3 L741 42" stroke="#8c6a2a" stroke-width="0.7"/><ellipse cx="741" cy="47.5" rx="6" ry="0.9" fill="#000" fill-opacity="0.08"/></svg><div class="a" style="left:571px;top:33px;font-size:11.6px;line-height:14px;color:#000;letter-spacing:-0.55px">Limit to 1000 rows</div><div class="a" style="left:263px;top:53px;width:478px;height:289px;background:#fff"></div><div class="a" style="left:333px;top:53px;width:408px;height:21px;background:#efefef"></div><div class="a" style="left:333px;top:53px;width:2px;height:21px;background:#2b2b2b"></div><div class="a" style="left:288px;top:58px;font-family:'Liberation Mono',monospace;font-size:11.55px;line-height:14px;color:#3d88b4">1</div><div class="a" style="left:302.6px;top:60.2px;width:6.2px;height:6.2px;border-radius:50%;background:#0b86f2"></div><div class="a" style="left:334px;top:57.5px;font-family:'Liberation Mono',monospace;font-size:11.65px;line-height:14px;color:#000;-webkit-text-stroke:0.3px currentColor"><span style="color:#1a78c0">SELECT</span> <span style="color:#3c4c5c">*</span> <span style="color:#1a78c0">FROM</span> ekolesnikov.material_import;</div><div class="a" style="left:263px;top:342px;width:478px;height:15px;background:#f0f0f0"></div><svg class="a" style="left:267px;top:345px" width="8" height="9" viewBox="0 0 8 9"><path d="M6 1 L2 4.5 L6 8" stroke="#606060" stroke-width="2" fill="none"/></svg><div class="a" style="left:280px;top:342px;width:461px;height:15px;background:#c8c8c8"></div><div class="a" style="left:263px;top:364px;width:478px;height:23px;background:#f3f3f7"></div><div class="sep" style="left:266px;top:368px;height:14px;background:#8a9aaa"></div><div class="a" style="left:274px;top:371px;font-weight:bold;font-size:9.5px;line-height:12px;letter-spacing:0.25px;color:#1e1e1e">Result Grid</div><div class="sep" style="left:335px;top:368px;height:14px"></div><div class="a" style="left:395px;top:371px;font-size:9.5px;line-height:12px;letter-spacing:0.12px;color:#1e1e1e">Filter Rows:</div><div class="a" style="left:451px;top:365px;width:100px;height:20px;background:#fff;border:1px solid #7a7a7a"></div><div class="sep" style="left:555px;top:368px;height:14px"></div><div class="a" style="left:560px;top:371px;font-size:9.5px;line-height:12px;letter-spacing:0.43px;color:#1e1e1e">Export:</div><div class="sep" style="left:627px;top:368px;height:14px"></div><div class="a" style="left:632px;top:371px;font-size:9.5px;line-height:12px;letter-spacing:0.3px;color:#1e1e1e">Wrap Cell Content:</div><svg class="a" style="left:263px;top:356px" width="478" height="31" viewBox="263 356 478 31"><defs><linearGradient id="rg1" x1="0" y1="0" x2="1" y2="0"><stop offset="0" stop-color="#9cc8f4"/><stop offset="1" stop-color="#3f86e0"/></linearGradient><linearGradient id="rg2" x1="0" y1="0" x2="1" y2="0"><stop offset="0" stop-color="#5a9ae8"/><stop offset="1" stop-color="#2a6ad0"/></linearGradient></defs><rect x="342" y="369" width="13" height="13" fill="#8c9096"/><rect x="343" y="370" width="3" height="2" fill="#fff"/><rect x="343" y="373" width="3" height="2" fill="#fff"/><rect x="343" y="376" width="3" height="2" fill="#fff"/><rect x="343" y="379" width="3" height="2" fill="#fff"/><rect x="351" y="370" width="3" height="2" fill="#fff"/><rect x="351" y="373" width="3" height="2" fill="#fff"/><rect x="351" y="376" width="3" height="2" fill="#fff"/><rect x="351" y="379" width="3" height="2" fill="#fff"/><rect x="346.5" y="369.5" width="4" height="12" fill="#ffe65a" stroke="#e8a200" stroke-width="1"/><path d="M372 376 A6 6 0 0 0 378.5 382 L378.5 379.4 A3.4 3.4 0 0 1 374.6 376 Z" fill="#4a90e6"/><path d="M372.6 370.4 L369.4 377.2 L376.8 376.6 Z" fill="#6aaaf0"/><path d="M384 376 A6 6 0 0 0 377.5 370 L377.5 372.6 A3.4 3.4 0 0 1 381.4 376 Z" fill="#3a7ee0"/><path d="M383.4 381.6 L386.6 374.8 L379.2 375.4 Z" fill="#2a6ed8"/><rect x="601" y="367" width="13" height="13" fill="#8a8e94"/><rect x="602" y="368" width="3" height="2" fill="#fff"/><rect x="606" y="368" width="3" height="2" fill="#fff"/><rect x="610" y="368" width="3" height="2" fill="#fff"/><rect x="602" y="371" width="3" height="2" fill="#fff"/><rect x="606" y="371" width="3" height="2" fill="#fff"/><rect x="610" y="371" width="3" height="2" fill="#fff"/><rect x="602" y="374" width="3" height="2" fill="#fff"/><rect x="602" y="377" width="3" height="2" fill="#fff"/><rect x="606.5" y="371.5" width="13" height="12.5" rx="1" fill="#3f7698" stroke="#f4f4f7" stroke-width="1"/><rect x="608" y="372" width="10" height="12" rx="0.8" fill="#3f7698"/><rect x="609.8" y="373.2" width="6.4" height="4.2" fill="#fff"/><rect x="610.5" y="380" width="5" height="3.5" fill="#e8e8e8"/><rect x="613.5" y="380.5" width="1" height="2.5" fill="#3f7698"/><rect x="728" y="370" width="13" height="13" fill="#fff"/><rect x="729" y="371" width="12" height="1.2" fill="#2a3f66"/><rect x="729" y="381" width="12" height="1.2" fill="#2a3f66"/><rect x="731" y="372" width="1" height="9" fill="#2a3f66"/><path d="M729.8 374.5 L731.5 372.2 L733.2 374.5 Z M729.8 378.7 L731.5 381 L733.2 378.7 Z" fill="#2a3f66"/><path d="M734.8 379.5 L737.2 373 L739.6 379.5 M735.6 377.3 H738.8" stroke="#4a5a7a" stroke-width="0.9" fill="none"/></svg><div class="a" style="left:263px;top:387px;width:478px;height:143px;background:#fff"></div><div class="a" style="left:263px;top:387px;width:460px;height:1px;background:#a0a0a0"></div><div class="a" style="left:263px;top:387px;width:1px;height:143px;background:#a0a0a0"></div><div class="a" style="left:263px;top:406px;width:460px;height:1px;background:#e4e4e4"></div><div class="a" style="left:263px;top:407px;width:460px;height:1px;background:#a0a0a0"></div><div class="a" style="left:263px;top:387px;width:1px;height:143px;background:#a0a0a0"></div><div class="a" style="left:288px;top:388px;width:1px;height:19px;background:#a8a8a8"></div><div class="a" style="left:424px;top:388px;width:1px;height:18px;background:#dcdcdc"></div><div class="a" style="left:476px;top:388px;width:1px;height:18px;background:#dcdcdc"></div><div class="a" style="left:520px;top:388px;width:1px;height:18px;background:#dcdcdc"></div><div class="a" style="left:564px;top:388px;width:1px;height:18px;background:#dcdcdc"></div><div class="a" style="left:621px;top:388px;width:1px;height:18px;background:#dcdcdc"></div><div class="a" style="left:675px;top:388px;width:1px;height:18px;background:#dcdcdc"></div><div class="a" style="left:722px;top:387px;width:1px;height:21px;background:#a8a8a8"></div><div class="gc" style="left:295.3px;top:391px">name</div><div class="gc" style="left:431.3px;top:391px">type</div><div class="gc" style="left:483.3px;top:391px">count</div><div class="gc" style="left:527.3px;top:391px">edizm</div><div class="gc" style="left:571.3px;top:391px">quantity</div><div class="gc" style="left:628.3px;top:391px">min_ost</div><div class="gc" style="left:682.3px;top:391px">price</div><div class="a" style="left:265px;top:424px;width:23px;height:1px;background:#dedede"></div><div class="gc" style="left:291px;top:410px">Шипы для льда 3x2</div><div class="gc" style="left:427px;top:410px">Шипы</div><div class="gc" style="left:479.8px;top:410px">3</div><div class="gc" style="left:523px;top:410px">г</div><div class="gc" style="left:567.8px;top:410px">470</div><div class="gc" style="left:624.8px;top:410px">26</div><div class="gc" style="left:678.8px;top:410px">6511</div><div class="a" style="left:289px;top:425px;width:433px;height:16px;background:#e8effa"></div><div class="a" style="left:424px;top:425px;width:1px;height:16px;background:#fff"></div><div class="a" style="left:476px;top:425px;width:1px;height:16px;background:#fff"></div><div class="a" style="left:520px;top:425px;width:1px;height:16px;background:#fff"></div><div class="a" style="left:564px;top:425px;width:1px;height:16px;background:#fff"></div><div class="a" style="left:621px;top:425px;width:1px;height:16px;background:#fff"></div><div class="a" style="left:675px;top:425px;width:1px;height:16px;background:#fff"></div><div class="a" style="left:265px;top:441px;width:23px;height:1px;background:#dedede"></div><div class="gc" style="left:291px;top:427px">Резина для льда 0x2</div><div class="gc" style="left:427px;top:427px">Резина</div><div class="gc" style="left:479.8px;top:427px">2</div><div class="gc" style="left:523px;top:427px">кг</div><div class="gc" style="left:567.8px;top:427px">816</div><div class="gc" style="left:624.8px;top:427px">21</div><div class="gc" style="left:678.8px;top:427px">48785</div><div class="a" style="left:265px;top:458px;width:23px;height:1px;background:#dedede"></div><div class="gc" style="left:291px;top:444px">Шипы для льда 2x2</div><div class="gc" style="left:427px;top:444px">Шипы</div><div class="gc" style="left:479.8px;top:444px">1</div><div class="gc" style="left:523px;top:444px">г</div><div class="gc" style="left:567.8px;top:444px">479</div><div class="gc" style="left:624.8px;top:444px">22</div><div class="gc" style="left:678.8px;top:444px">13077</div><div class="a" style="left:289px;top:459px;width:433px;height:16px;background:#e8effa"></div><div class="a" style="left:424px;top:459px;width:1px;height:16px;background:#fff"></div><div class="a" style="left:476px;top:459px;width:1px;height:16px;background:#fff"></div><div class="a" style="left:520px;top:459px;width:1px;height:16px;background:#fff"></div><div class="a" style="left:564px;top:459px;width:1px;height:16px;background:#fff"></div><div class="a" style="left:621px;top:459px;width:1px;height:16px;background:#fff"></div><div class="a" style="left:675px;top:459px;width:1px;height:16px;background:#fff"></div><div class="a" style="left:265px;top:475px;width:23px;height:1px;background:#dedede"></div><div class="gc" style="left:291px;top:461px">Шипы для льда 3x0</div><div class="gc" style="left:427px;top:461px">Шипы</div><div class="gc" style="left:479.8px;top:461px">9</div><div class="gc" style="left:523px;top:461px">г</div><div class="gc" style="left:567.8px;top:461px">885</div><div class="gc" style="left:624.8px;top:461px">5</div><div class="gc" style="left:678.8px;top:461px">52272</div><div class="a" style="left:265px;top:492px;width:23px;height:1px;background:#dedede"></div><div class="gc" style="left:291px;top:478px">Шипы для пустыни 3x2</div><div class="gc" style="left:427px;top:478px">Шипы</div><div class="gc" style="left:479.8px;top:478px">2</div><div class="gc" style="left:523px;top:478px">г</div><div class="gc" style="left:567.8px;top:478px">923</div><div class="gc" style="left:624.8px;top:478px">19</div><div class="gc" style="left:678.8px;top:478px">28748</div><div class="a" style="left:289px;top:493px;width:433px;height:16px;background:#e8effa"></div><div class="a" style="left:424px;top:493px;width:1px;height:16px;background:#fff"></div><div class="a" style="left:476px;top:493px;width:1px;height:16px;background:#fff"></div><div class="a" style="left:520px;top:493px;width:1px;height:16px;background:#fff"></div><div class="a" style="left:564px;top:493px;width:1px;height:16px;background:#fff"></div><div class="a" style="left:621px;top:493px;width:1px;height:16px;background:#fff"></div><div class="a" style="left:675px;top:493px;width:1px;height:16px;background:#fff"></div><div class="a" style="left:265px;top:509px;width:23px;height:1px;background:#dedede"></div><div class="gc" style="left:291px;top:495px">Шипы для лета 3x1</div><div class="gc" style="left:427px;top:495px">Шипы</div><div class="gc" style="left:479.8px;top:495px">6</div><div class="gc" style="left:523px;top:495px">кг</div><div class="gc" style="left:567.8px;top:495px">184</div><div class="gc" style="left:624.8px;top:495px">40</div><div class="gc" style="left:678.8px;top:495px">51974</div><div class="a" style="left:265px;top:526px;width:23px;height:1px;background:#dedede"></div><div class="gc" style="left:291px;top:512px">Резина для зимы 2x3</div><div class="gc" style="left:427px;top:512px">Резина</div><div class="gc" style="left:479.8px;top:512px">3</div><div class="gc" style="left:523px;top:512px">м</div><div class="gc" style="left:567.8px;top:512px">344</div><div class="gc" style="left:624.8px;top:512px">12</div><div class="gc" style="left:678.8px;top:512px">53323</div><div class="a" style="left:289px;top:527px;width:433px;height:16px;background:#e8effa"></div><div class="a" style="left:424px;top:527px;width:1px;height:16px;background:#fff"></div><div class="a" style="left:476px;top:527px;width:1px;height:16px;background:#fff"></div><div class="a" style="left:520px;top:527px;width:1px;height:16px;background:#fff"></div><div class="a" style="left:564px;top:527px;width:1px;height:16px;background:#fff"></div><div class="a" style="left:621px;top:527px;width:1px;height:16px;background:#fff"></div><div class="a" style="left:675px;top:527px;width:1px;height:16px;background:#fff"></div><div class="a" style="left:265px;top:543px;width:23px;height:1px;background:#dedede"></div><div class="a" style="left:288px;top:408px;width:1px;height:122px;background:#a8a8a8"></div><svg class="a" style="left:270px;top:412px" width="6" height="10" viewBox="0 0 6 10"><path d="M0.3 0.6 L5.8 5 L0.3 9.4 Z" fill="#3a3a3a"/></svg></body></html>
